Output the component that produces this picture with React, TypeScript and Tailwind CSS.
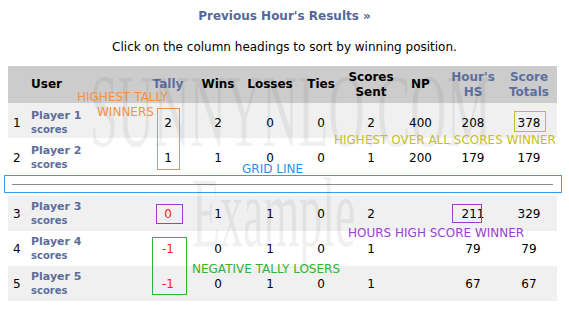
import React from "react";

type Row = {
  pos: number;
  name: string;
  tally: string;
  wins: string;
  losses: string;
  ties: string;
  sent: string;
  np: string;
  hs: string;
  total: string;
  shade: boolean;
  neg: boolean;
};

const topRows: Row[] = [
  { pos: 1, name: "Player 1", tally: "2", wins: "2", losses: "0", ties: "0", sent: "2", np: "400", hs: "208", total: "378", shade: true, neg: false },
  { pos: 2, name: "Player 2", tally: "1", wins: "1", losses: "0", ties: "0", sent: "1", np: "200", hs: "179", total: "179", shade: false, neg: false },
];

const bottomRows: Row[] = [
  { pos: 3, name: "Player 3", tally: "0", wins: "1", losses: "1", ties: "0", sent: "2", np: "", hs: "211", total: "329", shade: true, neg: true },
  { pos: 4, name: "Player 4", tally: "-1", wins: "0", losses: "1", ties: "0", sent: "1", np: "", hs: "79", total: "79", shade: false, neg: true },
  { pos: 5, name: "Player 5", tally: "-1", wins: "0", losses: "1", ties: "0", sent: "1", np: "", hs: "67", total: "67", shade: true, neg: true },
];

const cols = "grid grid-cols-[18px_118px_48px_52px_52px_50px_50px_49px_56px_56px]";

const ResultRow = ({ row, top }: { row: Row; top: boolean }) => (
  <div
    className={`${cols} items-center text-[12px] text-black ${row.shade ? "bg-[#f0f0f0]" : "bg-white"} ${
      top ? (row.pos === 1 ? "h-[35px] pt-[4px]" : "h-[34px] pt-[5px]") : "h-[35px]"
    }`}
  >
    <div className="pl-[5px]">{row.pos}</div>
    <div className="pl-[5px] font-bold text-[#5b6d9b]">
      <div className="text-[11px] leading-[14px]">{row.name}</div>
      <div className="text-[10px] leading-[14px]">scores</div>
    </div>
    <div className={`text-center ${row.neg ? "text-[#ff1a1a]" : ""}`}>{row.tally}</div>
    <div className="text-center">{row.wins}</div>
    <div className="text-center">{row.losses}</div>
    <div className="text-center">{row.ties}</div>
    <div className="text-center">{row.sent}</div>
    <div className="text-center">{row.np}</div>
    <div className="text-center">{row.hs}</div>
    <div className="text-center">{row.total}</div>
  </div>
);

export default function App() {
  return (
    <div className="relative w-[569px] h-[312px] bg-white overflow-hidden font-['DejaVu_Sans',Verdana,sans-serif]">
      {/* heading */}
      <div className="pt-[8px] text-center text-[12px] leading-[16px] font-bold text-[#55679a]">
        Previous Hour's Results »
      </div>
      <div className="mt-[16px] text-center text-[12px] leading-[14px] text-black">
        Click on the column headings to sort by winning position.
      </div>

      {/* table */}
      <div className="mt-[12px]">
        <div className={`${cols} ml-[8px] w-[549px] h-[37px] items-center bg-[#cccccc] text-[12px] leading-[15px] font-bold text-black`}>
          <div />
          <div className="pl-[5px]">User</div>
          <div className="text-center text-[#5d6fa0]">Tally</div>
          <div className="text-center">Wins</div>
          <div className="text-center">Losses</div>
          <div className="text-center">Ties</div>
          <div className="text-center">
            Scores
            <br />
            Sent
          </div>
          <div className="text-center">NP</div>
          <div className="text-center text-[#5d6fa0]">
            Hour's
            <br />
            HS
          </div>
          <div className="text-center text-[#5d6fa0]">
            Score
            <br />
            Totals
          </div>
        </div>

        <div className="ml-[8px] w-[549px]">
          {topRows.map((r) => (
            <ResultRow key={r.pos} row={r} top />
          ))}
        </div>

        {/* grid line */}
        <div className="ml-[4px] mt-[3px] mb-[3px] w-[558px] h-[18px] border border-[#3a9be6] flex items-center">
          <div className="ml-[7px] w-[541px] h-px bg-[#8c8c8c]" />
        </div>

        <div className="ml-[8px] w-[549px]">
          {bottomRows.map((r) => (
            <ResultRow key={r.pos} row={r} top={false} />
          ))}
        </div>
      </div>

      {/* watermark */}
      <div className="pointer-events-none absolute left-[90px] top-[59px] origin-left scale-x-[0.48] whitespace-nowrap text-[104px] leading-none text-black/[0.06] font-['Liberation_Serif',serif]">
        SUNNYNLO.COM
      </div>
      <div className="pointer-events-none absolute left-[192px] top-[163px] origin-left scale-x-[0.46] whitespace-nowrap text-[100px] leading-none text-black/[0.06] font-['Liberation_Serif',serif]">
        Example
      </div>

      {/* annotations */}
      <div className="pointer-events-none absolute inset-0 text-[12px] leading-[14px]">
        <div className="absolute left-[77px] top-[90px] text-[#f5903f]">HIGHEST TALLY</div>
        <div className="absolute left-[97px] top-[105px] text-[#f5903f]">WINNERS</div>
        <div className="absolute left-[157px] top-[108px] w-[23px] h-[62px] border border-[#f5903f]" />

        <div className="absolute left-[514px] top-[111px] w-[32px] h-[21px] border border-[#c6bf1c]" />
        <div className="absolute left-[334px] top-[133px] text-[#c6bf1c]">HIGHEST OVER ALL SCORES WINNER</div>

        <div className="absolute left-[242px] top-[162px] text-[#2f8fe6]">GRID LINE</div>

        <div className="absolute left-[156px] top-[204px] w-[27px] h-[20px] border border-[#9b3fd2]" />
        <div className="absolute left-[452px] top-[204px] w-[30px] h-[19px] border border-[#9b3fd2]" />
        <div className="absolute left-[348px] top-[226px] text-[#9b3fd2]">HOURS HIGH SCORE WINNER</div>

        <div className="absolute left-[152px] top-[237px] w-[35px] h-[58px] border border-[#2fb62f]" />
        <div className="absolute left-[192px] top-[262px] text-[#2fb62f]">NEGATIVE TALLY LOSERS</div>
      </div>
    </div>
  );
}
